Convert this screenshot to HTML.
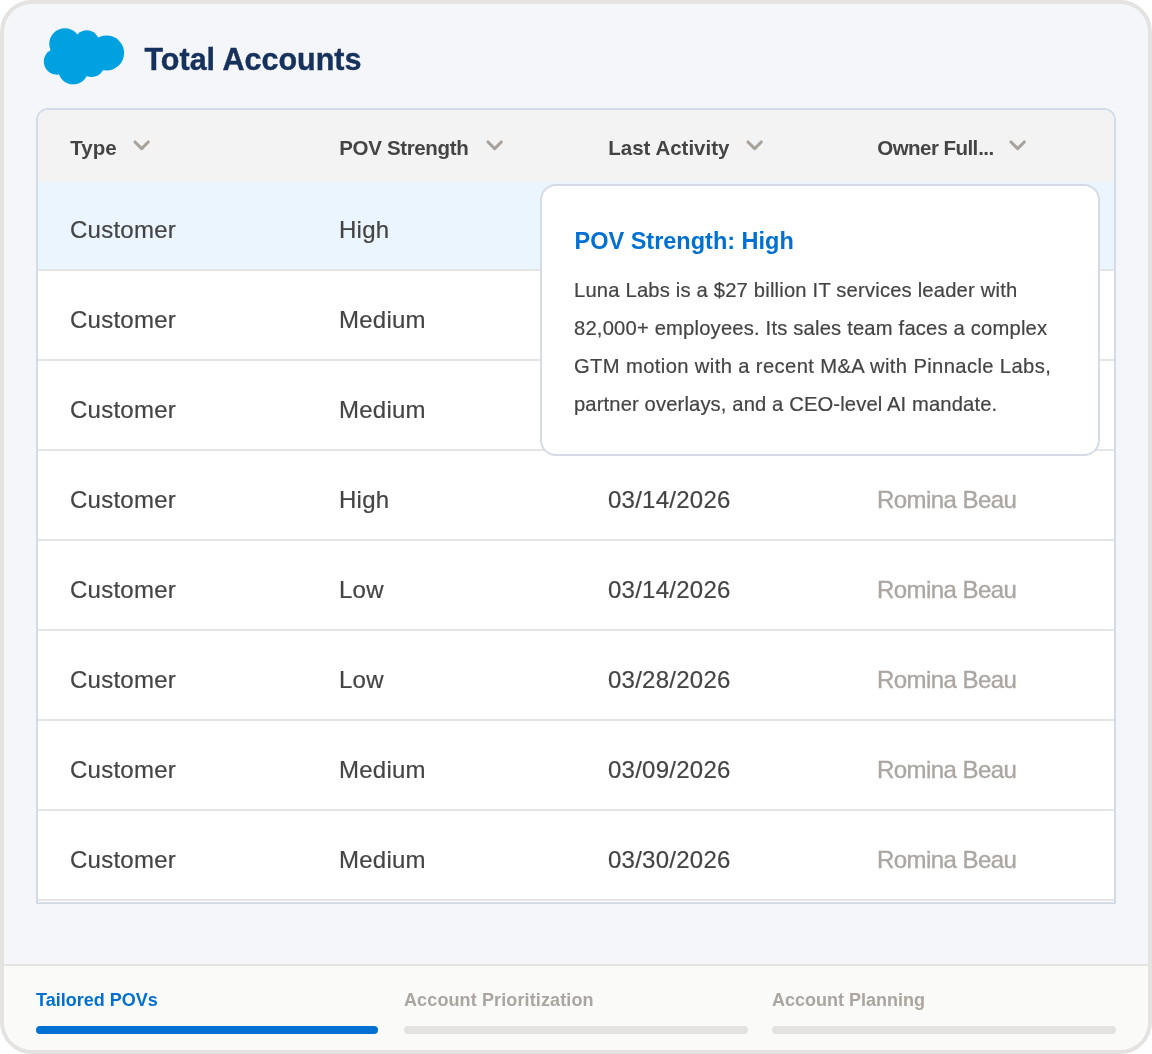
<!DOCTYPE html>
<html lang="en">
<head>
<meta charset="utf-8">
<title>Total Accounts</title>
<style>
*{box-sizing:border-box;margin:0;padding:0}
html,body{width:1152px;height:1054px;background:#fff;overflow:hidden}
body{font-family:"Liberation Sans",Arial,sans-serif;color:#444;position:relative}
.frame{will-change:transform;position:absolute;left:0;top:0;width:1152px;height:1054px;border:4px solid #e5e3e1;border-radius:32px;background:#f4f6fa;overflow:hidden}
.logo{position:absolute;left:0;top:0}
h1{-webkit-text-stroke:.4px #16325c;position:absolute;left:140.5px;top:37px;font-size:30.5px;line-height:36px;font-weight:700;color:#16325c;white-space:nowrap}
.table{position:absolute;left:32px;top:104px;width:1080px;height:796px;border:2px solid #d3dbe8;border-bottom:2px solid #d3dbe8;border-radius:12px 12px 0 0;background:#fff;overflow:hidden}
.thead{position:absolute;left:0;top:0;width:100%;height:72px;background:#f3f3f3}
.th{position:absolute;top:1.5px;margin-left:.3px;height:72px;line-height:72px;font-size:20.5px;font-weight:700;color:#444;white-space:nowrap}
.th svg{position:absolute;top:27.6px;overflow:visible}
.row{position:absolute;left:0;width:100%;height:90px;border-bottom:2px solid #e5e5e5;background:#fff}
.row.hl{background:#eaf5fe;height:89px}.row.hl .td{top:4px}
.td{-webkit-text-stroke:.2px #444;position:absolute;top:5px;letter-spacing:.25px;height:88px;line-height:88px;font-size:24px;color:#444;white-space:nowrap}
.c1{left:32px}.c2{left:301px}.c3{left:570px}.c4{left:839px}
.td.c4{color:#aba6a1;letter-spacing:-.55px;-webkit-text-stroke:.35px #aba6a1}
.tip{position:absolute;left:536px;top:180px;width:560px;height:272px;background:#fff;border:2px solid #d4dae6;border-radius:16px}
.tip h2{position:absolute;left:32.5px;top:40px;font-size:23.5px;line-height:30px;font-weight:700;color:#0070d2;white-space:nowrap}
.tip p{-webkit-text-stroke:.2px #444;position:absolute;left:32px;top:85px;font-size:20.2px;letter-spacing:.19px;line-height:38px;color:#444;white-space:nowrap}
.footer{position:absolute;left:0;top:960px;width:1144px;height:86px;background:#fafaf9;border-top:2px solid #e5e3e1}
.step{position:absolute;top:0;width:342.67px}
.step span{position:absolute;left:0;top:22px;font-size:18px;line-height:24px;font-weight:700;color:#aaa5a0;white-space:nowrap}
.step i{position:absolute;left:0;top:60px;width:100%;height:8px;border-radius:4px;background:#e5e3e1}
.step.on span{color:#0070d2}
.step.on i{background:#0070d2}
</style>
</head>
<body>
<div class="frame">
<svg class="logo" width="160" height="100" viewBox="4 4 160 100"><g fill="#00a1e0">
<circle cx="64.9" cy="43.8" r="15.6"/><circle cx="86.8" cy="42.8" r="12.5"/><circle cx="106.6" cy="53" r="17.5"/><circle cx="56.9" cy="61.6" r="13.1"/><circle cx="73.2" cy="69.2" r="15.1"/><circle cx="91.5" cy="64" r="13"/><rect x="62" y="45" width="40" height="22"/></g></svg>
<h1>Total Accounts</h1>
<div class="table">
<div class="thead">
<div class="th c1">Type<svg style="left:61.7px" width="20" height="14" viewBox="-3 -3 20 14"><path d="M0 0L6.65 6.65L13.3 0" fill="none" stroke="#a8a29c" stroke-width="3.1" stroke-linecap="round" stroke-linejoin="round"/></svg></div>
<div class="th c2" style="letter-spacing:-.35px">POV Strength<svg style="left:145.4px" width="20" height="14" viewBox="-3 -3 20 14"><path d="M0 0L6.65 6.65L13.3 0" fill="none" stroke="#a8a29c" stroke-width="3.1" stroke-linecap="round" stroke-linejoin="round"/></svg></div>
<div class="th c3">Last Activity<svg style="left:136.3px" width="20" height="14" viewBox="-3 -3 20 14"><path d="M0 0L6.65 6.65L13.3 0" fill="none" stroke="#a8a29c" stroke-width="3.1" stroke-linecap="round" stroke-linejoin="round"/></svg></div>
<div class="th c4" style="letter-spacing:-.55px">Owner Full<b style="letter-spacing:-.6px;margin-left:.5px">...</b><svg style="left:130.4px" width="20" height="14" viewBox="-3 -3 20 14"><path d="M0 0L6.65 6.65L13.3 0" fill="none" stroke="#a8a29c" stroke-width="3.1" stroke-linecap="round" stroke-linejoin="round"/></svg></div>
</div>
<div class="row hl" style="top:72px"><div class="td c1">Customer</div><div class="td c2">High</div><div class="td c3">03/12/2026</div><div class="td c4">Romina Beau</div></div>
<div class="row" style="top:161px"><div class="td c1">Customer</div><div class="td c2">Medium</div><div class="td c3">03/18/2026</div><div class="td c4">Romina Beau</div></div>
<div class="row" style="top:251px"><div class="td c1">Customer</div><div class="td c2">Medium</div><div class="td c3">03/21/2026</div><div class="td c4">Romina Beau</div></div>
<div class="row" style="top:341px"><div class="td c1">Customer</div><div class="td c2">High</div><div class="td c3">03/14/2026</div><div class="td c4">Romina Beau</div></div>
<div class="row" style="top:431px"><div class="td c1">Customer</div><div class="td c2">Low</div><div class="td c3">03/14/2026</div><div class="td c4">Romina Beau</div></div>
<div class="row" style="top:521px"><div class="td c1">Customer</div><div class="td c2">Low</div><div class="td c3">03/28/2026</div><div class="td c4">Romina Beau</div></div>
<div class="row" style="top:611px"><div class="td c1">Customer</div><div class="td c2">Medium</div><div class="td c3">03/09/2026</div><div class="td c4">Romina Beau</div></div>
<div class="row" style="top:701px"><div class="td c1">Customer</div><div class="td c2">Medium</div><div class="td c3">03/30/2026</div><div class="td c4">Romina Beau</div></div>
</div>
<div class="tip">
<h2>POV Strength: High</h2>
<p>Luna Labs is a $27 billion IT services leader with<br>82,000+ employees. Its sales team faces a complex<br><span style="letter-spacing:.38px">GTM motion with a recent M&amp;A with Pinnacle Labs,</span><br><span style="letter-spacing:.13px">partner overlays, and a CEO-level AI mandate.</span></p>
</div>
<div class="footer">
<div class="step on" style="left:32px;width:342px"><span>Tailored POVs</span><i></i></div>
<div class="step" style="left:400px;width:344px"><span style="letter-spacing:.12px">Account Prioritization</span><i></i></div>
<div class="step" style="left:768px;width:344px"><span>Account Planning</span><i></i></div>
</div>
</div>
</body>
</html>
